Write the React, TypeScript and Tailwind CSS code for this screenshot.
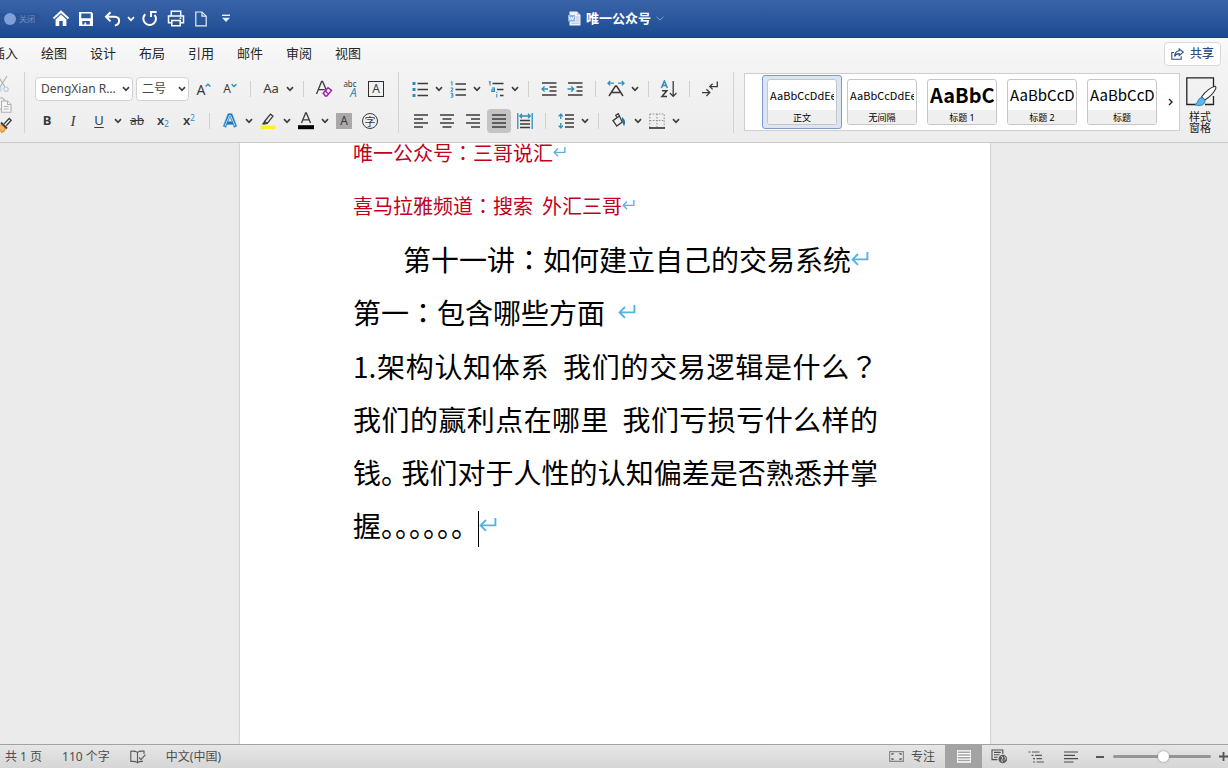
import React from "react";
import type { ReactNode } from "react";

const UI_FONT = "font-['Noto_Sans','Noto_Sans_CJK_SC',sans-serif]";
const INK = "#3b3b3b";
const TEAL = "#2b8fb8";

function Tool({ label, active = false, children }: { label: string; active?: boolean; children: ReactNode }) {
  return (
    <button type="button" aria-label={label} className="flex h-6 w-[26px] shrink-0 items-center justify-center">
      <span className={active ? "flex h-6 w-6 items-center justify-center rounded-sm bg-[#c4c4c4]" : "flex h-6 w-6 items-center justify-center"}>
        {children}
      </span>
    </button>
  );
}

function ChevronGlyph({ color = "#3f3f3f" }: { color?: string }) {
  return (
    <svg width="8" height="6" viewBox="0 0 8 6" fill="none" stroke={color} strokeWidth="1.7">
      <path d="M1 1.2 L4 4.3 L7 1.2" />
    </svg>
  );
}

function More({ label }: { label: string }) {
  return (
    <button type="button" aria-label={label} className="flex h-6 w-3 shrink-0 items-center justify-center">
      <ChevronGlyph />
    </button>
  );
}

function Sep() {
  return (
    <span className="flex h-6 w-[15px] shrink-0 items-center justify-center">
      <span className="h-4 w-px bg-[#d0d0d0]" />
    </span>
  );
}

function GroupSep() {
  return <span className="mt-[3px] h-[61px] w-px shrink-0 bg-[#d3d3d3]" />;
}

function Icon({ children, w = 18, h = 18 }: { children: ReactNode; w?: number; h?: number }) {
  return (
    <svg width={w} height={h} viewBox={`0 0 ${w} ${h}`} fill="none" stroke={INK} strokeWidth="1.3" className="shrink-0">
      {children}
    </svg>
  );
}

function Dropdown({ label, value, className }: { label: string; value: string; className: string }) {
  return (
    <span className={`relative flex shrink-0 ${className}`}>
      <select
        aria-label={label}
        className="h-6 w-full appearance-none rounded-sm border border-[#d2d2d2] bg-white pl-[5px] text-[12px] text-[#444]"
      >
        <option>{value}</option>
      </select>
      <span className="pointer-events-none absolute right-[3px] top-0 flex h-6 items-center">
        <ChevronGlyph />
      </span>
    </span>
  );
}

function TitleBar() {
  return (
    <header className="grid h-[38px] shrink-0 grid-cols-[1fr_auto_1fr] items-center border-b border-[#1f3f7c] bg-linear-to-b from-[#3a64aa] to-[#1b4a90] text-white">
      <div className="flex items-center">
        <label className="flex h-3 w-[41px] items-center gap-[3px] rounded-r-full bg-[#2a5499] pl-1 text-[8px] text-[#6f8fc4]">
          <input type="checkbox" className="h-3 w-3 shrink-0 appearance-none rounded-full bg-[#7f9fd6]" />
          <span>关闭</span>
        </label>
        <div className="ml-2 flex items-center">
          <button type="button" aria-label="主页" className="flex w-6 justify-center">
            <svg width="18" height="17" viewBox="0 0 18 17">
              <path d="M1.5 8.5 L9 1.7 L16.5 8.5" fill="none" stroke="#fff" strokeWidth="2" />
              <path d="M3.6 9.4 L9 4.6 L14.4 9.4 V16 H10.7 V11 H7.3 V16 H3.6 Z" fill="#fff" />
            </svg>
          </button>
          <button type="button" aria-label="保存" className="flex w-[26px] justify-center">
            <svg width="16" height="16" viewBox="0 0 16 16">
              <path fillRule="evenodd" fill="#fff" d="M1 1 H13.5 L15 2.5 V15 H1 Z M3.3 2.6 V7.2 H12.7 V2.6 Z M4.3 10 V13.6 H6.4 V11.6 H8.2 V13.6 H11.8 V10 Z" />
            </svg>
          </button>
          <button type="button" aria-label="撤消" className="flex w-[26px] justify-center">
            <svg width="17" height="16" viewBox="0 0 17 16" fill="none" stroke="#fff" strokeWidth="2">
              <path d="M6.5 1.2 L2 5.8 L6.5 10.4" />
              <path d="M2.4 5.8 H10.6 C16.6 6 16.6 13.2 10.8 14.6" />
            </svg>
          </button>
          <button type="button" aria-label="撤消列表" className="flex w-3 justify-center">
            <ChevronGlyph color="#fff" />
          </button>
          <button type="button" aria-label="恢复" className="flex w-[26px] justify-center">
            <svg width="18" height="17" viewBox="0 0 18 17" fill="none" stroke="#fff" strokeWidth="2">
              <path d="M4.2 4.2 A6.3 6.3 0 1 0 13.6 4.8" />
              <path d="M10 7 V2 H15.6" />
            </svg>
          </button>
          <button type="button" aria-label="打印" className="flex w-[26px] justify-center">
            <svg width="18" height="17" viewBox="0 0 18 17" fill="none" stroke="#fff" strokeWidth="1.5">
              <path d="M4.3 6 V1.2 H13.7 V6" />
              <path d="M4.3 12.8 H1.5 V6 H16.5 V12.8 H13.7" />
              <path d="M4.8 10.4 H13.2 V15.8 H4.8 Z" />
              <path d="M12.6 8.2 H14.4" />
            </svg>
          </button>
          <button type="button" aria-label="新建" className="flex w-6 justify-center">
            <svg width="12" height="16" viewBox="0 0 12 16" fill="none" stroke="#e8eefa" strokeWidth="1.2">
              <path d="M0.8 1 H7 L11.2 5.2 V14.8 H0.8 Z" />
              <path d="M7 1 V5.2 H11.2" />
            </svg>
          </button>
          <button type="button" aria-label="自定义工具栏" className="flex w-[26px] justify-center">
            <svg width="8" height="9" viewBox="0 0 8 9" fill="#e8eefa">
              <rect x="0" y="0.6" width="8" height="1.4" />
              <path d="M0 3.8 H8 L4 8 Z" />
            </svg>
          </button>
        </div>
      </div>
      <h1 className="flex items-center gap-[5px] pl-1 text-[13px] font-bold">
        <svg width="13" height="15" viewBox="0 0 13 15">
          <path d="M1.5 0.5 H9 L12.5 4 V14.5 H1.5 Z" fill="#eef3fb" />
          <path d="M9 0.5 V4 H12.5 Z" fill="#b9cbe8" />
          <path d="M7.5 6 H11.5 M7.5 8 H11.5 M7.5 10 H11.5 M3 12.2 H11.5" stroke="#9db6dc" strokeWidth="0.8" />
          <rect x="0" y="4" width="7" height="6.5" fill="#8fb0e2" />
          <path d="M1.2 5.5 L2.4 9 L3.5 6 L4.6 9 L5.8 5.5" fill="none" stroke="#fff" strokeWidth="0.9" />
        </svg>
        <span>唯一公众号</span>
        <svg width="8" height="5" viewBox="0 0 8 5" fill="none" stroke="#7f9fd6" strokeWidth="1">
          <path d="M0.5 0.8 L4 4 L7.5 0.8" />
        </svg>
      </h1>
      <span />
    </header>
  );
}

const TABS = ["插入", "绘图", "设计", "布局", "引用", "邮件", "审阅", "视图"];

function TabBar() {
  return (
    <div className="flex h-[31px] shrink-0 items-center justify-between bg-linear-to-b from-[#f9f9f9] to-[#f3f3f3] pr-[7px]">
      <nav className="-ml-2 flex gap-[23px] text-[13px] text-[#262626]">
        {TABS.map((tab) => (
          <a key={tab} href="#ribbon" className="shrink-0">
            {tab}
          </a>
        ))}
      </nav>
      <button
        type="button"
        className="flex h-6 items-center gap-1.5 rounded-sm border border-[#d9d9d9] bg-white px-1.5 text-[12px] font-medium text-[#2b4f8c]"
      >
        <svg width="13" height="12" viewBox="0 0 13 12" fill="none" stroke="#2b4f8c" strokeWidth="1.1">
          <path d="M3 4.5 H0.8 V11.2 H10.2 V8.2" />
          <path d="M8.2 0.9 L12.3 4.2 L8.2 7.5 V5.6 C6 5.5 4.6 6.4 3.6 8.4 C3.8 5 5.4 3 8.2 2.8 Z" />
        </svg>
        共享
      </button>
    </div>
  );
}

function ClipboardGroup() {
  return (
    <div className="flex w-6 shrink-0 flex-col overflow-hidden pt-1">
      <button type="button" aria-label="剪切" className="-ml-1 h-[21px] w-5 opacity-60">
        <svg width="14" height="18" viewBox="0 0 14 18" fill="none" strokeWidth="1.2">
          <path d="M2 1 L9 12 M11 1 L4 12" stroke="#8a8a8a" />
          <circle cx="3" cy="14.2" r="2.2" stroke="#8fb8d4" />
          <circle cx="10" cy="14.2" r="2.2" stroke="#8fb8d4" />
        </svg>
      </button>
      <button type="button" aria-label="复制" className="-ml-1 h-[21px] w-5">
        <svg width="17" height="16" viewBox="0 0 17 16" fill="#f6f6f6" stroke="#b0b0b0" strokeWidth="1.1">
          <path d="M0.5 1 H6.5 L9 3.5 V12 H0.5 Z" />
          <path d="M5.5 4 H11.5 L15 7.5 V15.2 H5.5 Z" />
          <path d="M11.5 4 V7.5 H15 M7.8 9.5 H12.6 M7.8 12 H12.6" />
        </svg>
      </button>
      <button type="button" aria-label="格式刷" className="-ml-1 h-5 w-5">
        <svg width="17" height="17" viewBox="0 0 17 17" fill="none" strokeWidth="1.3">
          <path d="M0.5 9.5 L6 15.5 C8.5 14.5 9.2 12.5 9.3 10.5 L6 7.5 C4 8.5 2.4 9.2 0.5 9.5 Z" fill="#f5b469" stroke="#e39a3d" />
          <path d="M5 5.5 L11 11.5" stroke={INK} strokeWidth="1.8" />
          <path d="M8.3 6.8 L13.2 1.4 L15.2 3.2 L10.3 8.8" stroke={INK} />
        </svg>
      </button>
    </div>
  );
}

function FontGroup() {
  return (
    <div className="flex shrink-0 flex-col gap-2 pl-[9px] pr-[9px] pt-2 text-[#3b3b3b]">
      <div className="flex items-center">
        <span className="w-px" />
        <Dropdown label="字体" value="DengXian R..." className="w-[98px]" />
        <Dropdown label="字号" value="二号" className="ml-[3px] mr-0.5 w-[53px]" />
        <Tool label="增大字号">
          <span className="text-[14px]">A</span>
          <svg width="6" height="12" viewBox="0 0 6 12" fill="none" stroke={TEAL} strokeWidth="1.4">
            <path d="M0.6 3.6 L3 1.2 L5.4 3.6" />
          </svg>
        </Tool>
        <Tool label="减小字号">
          <span className="text-[12px]">A</span>
          <svg width="6" height="12" viewBox="0 0 6 12" fill="none" stroke={TEAL} strokeWidth="1.4">
            <path d="M0.6 1.2 L3 3.6 L5.4 1.2" />
          </svg>
        </Tool>
        <Sep />
        <Tool label="更改大小写">
          <span className="text-[13px]">Aa</span>
        </Tool>
        <More label="大小写选项" />
        <Sep />
        <Tool label="清除格式">
          <Icon>
            <path d="M1.5 14 L6.6 1.5 H7.6 L11.5 10.5 M3.4 9.6 H9.8" />
            <path d="M8.2 13.2 L13 7.6 L16.6 10.4 L11.8 16 H10.4 Z M10 11 L13.8 14" stroke="#a21caf" strokeWidth="1.4" />
          </Icon>
        </Tool>
        <Tool label="拼音指南">
          <span className="flex flex-col items-end leading-none">
            <span className="text-[8px] leading-[8px]">abc</span>
            <span className="text-[12px] italic leading-[10px] text-[#2b8fb8]">A</span>
          </span>
        </Tool>
        <Tool label="字符边框">
          <span className="flex h-4 w-4 items-center justify-center border border-[#2d2d2d] text-[12px]">A</span>
        </Tool>
      </div>
      <div className="flex items-center">
        <Tool label="加粗">
          <span className="text-[13px] font-bold">B</span>
        </Tool>
        <Tool label="倾斜">
          <span className="font-['Liberation_Serif',serif] text-[15px] italic">I</span>
        </Tool>
        <Tool label="下划线">
          <span className="text-[13px] underline underline-offset-2">U</span>
        </Tool>
        <More label="下划线选项" />
        <Tool label="删除线">
          <span className="text-[12px] line-through">ab</span>
        </Tool>
        <Tool label="下标">
          <span className="text-[13px] font-semibold">
            x<sub className="text-[8px] font-normal text-[#2b8fb8]">2</sub>
          </span>
        </Tool>
        <Tool label="上标">
          <span className="text-[13px] font-semibold">
            x<sup className="text-[8px] font-normal text-[#2b8fb8]">2</sup>
          </span>
        </Tool>
        <Sep />
        <Tool label="文本效果">
          <svg width="16" height="16" viewBox="0 0 16 16" fill="none" strokeLinejoin="round">
            <path d="M2.5 14 L7 2 H9 L13.5 14 M4.8 10 H11.2" stroke="#7cc0ee" strokeWidth="4" />
            <path d="M2.5 14 L7 2 H9 L13.5 14 M4.8 10 H11.2" stroke="#1f72b8" strokeWidth="2.4" />
            <path d="M2.8 13.4 L7.4 2.4 H8.6 L13.2 13.4" stroke="#f2f8fd" strokeWidth="0.8" />
          </svg>
        </Tool>
        <More label="文本效果选项" />
        <Tool label="突出显示">
          <Icon>
            <path d="M5.5 9.5 L11.5 2.2 L14 4.2 L8.2 11.4 L5 12 Z M5.5 9.5 L8.2 11.4" />
            <path d="M2.5 12.6 L5 9.8 L6.6 11.8 Z" fill={INK} stroke="none" />
            <rect x="1.5" y="13.4" width="15" height="3.8" rx="1" fill="#fbf51f" stroke="none" />
          </Icon>
        </Tool>
        <More label="突出显示选项" />
        <Tool label="字体颜色">
          <Icon>
            <path d="M4.5 11 L8.6 1 H9.4 L13.5 11 M6 7.8 H12" />
            <rect x="1" y="13.2" width="16" height="4" fill="#000" stroke="none" />
          </Icon>
        </Tool>
        <More label="字体颜色选项" />
        <Tool label="字符底纹">
          <span className="flex h-4 w-4 items-center justify-center bg-[#a9a9a9] text-[12px]">A</span>
        </Tool>
        <Tool label="带圈字符">
          <span className="flex h-4 w-4 items-center justify-center rounded-full border border-[#3b3b3b] text-[11px] leading-none">字</span>
        </Tool>
      </div>
    </div>
  );
}

function ParagraphGroup() {
  return (
    <div className="flex shrink-0 flex-col gap-2 pl-2 pr-2.5 pt-2">
      <div className="flex items-center">
        <Tool label="项目符号">
          <Icon w={16} h={16}>
            <path d="M5.5 2.5 H16 M5.5 8.5 H16 M5.5 14.5 H16" />
            <path d="M0.5 1 H3.5 V4 H0.5 Z M0.5 7 H3.5 V10 H0.5 Z M0.5 13 H3.5 V16 H0.5 Z" fill={TEAL} stroke="none" />
          </Icon>
        </Tool>
        <More label="项目符号选项" />
        <Tool label="编号">
          <Icon w={16} h={17}>
            <path d="M5.5 3 H16 M5.5 8.5 H16 M5.5 14 H16" />
            <path d="M0.8 1.2 L2 0.7 V4.6 M0.6 7 H2.8 V8.4 L0.8 10.2 H3 M0.6 12.4 H2.8 V16.2 H0.6 M1.2 14.2 H2.8" stroke={TEAL} strokeWidth="1" />
          </Icon>
        </Tool>
        <More label="编号选项" />
        <Tool label="多级列表">
          <Icon w={16} h={17}>
            <path d="M4.5 2.5 H15.5 M9 8.5 H15.5 M12 14.5 H15.5" />
            <path d="M0.8 1 L2 0.5 V4.4 M3.8 7 H6.4 V10.4 H3.8 V8.7 H6.4 M8.8 13 V16.6 M8.8 11 V12" stroke={TEAL} strokeWidth="1.1" />
          </Icon>
        </Tool>
        <More label="多级列表选项" />
        <Sep />
        <Tool label="减少缩进">
          <Icon w={16} h={16}>
            <path d="M1 2 H15.5 M8.5 6 H15.5 M8.5 10 H15.5 M1 14 H15.5" />
            <path d="M7 8 H1 M3.6 5.4 L1 8 L3.6 10.6" stroke={TEAL} />
          </Icon>
        </Tool>
        <Tool label="增加缩进">
          <Icon w={16} h={16}>
            <path d="M1 2 H15.5 M9.5 6 H15.5 M9.5 10 H15.5 M1 14 H15.5" />
            <path d="M0.5 8 H6.8 M4.2 5.4 L6.8 8 L4.2 10.6" stroke={TEAL} />
          </Icon>
        </Tool>
        <Sep />
        <Tool label="中文版式">
          <Icon>
            <path d="M2 16 L8.4 6 H9.6 L16 16 M4.6 12.6 H13.4" strokeWidth="1.5" />
            <path d="M1 3.2 H7 M3.2 1 L1 3.2 L3.2 5.4 M11 3.2 H17 M14.8 1 L17 3.2 L14.8 5.4" stroke={TEAL} />
          </Icon>
        </Tool>
        <More label="中文版式选项" />
        <Sep />
        <Tool label="排序">
          <Icon>
            <path d="M1.4 8 L4.4 1 L7.4 8 M2.4 5.6 H6.4" stroke={TEAL} strokeWidth="1.5" />
            <path d="M2 10.8 H6.8 L2 16.4 H7" strokeWidth="1.5" />
            <path d="M13.2 1 V16.4 M9.9 13 L13.2 16.4 L16.5 13" />
          </Icon>
        </Tool>
        <Sep />
        <Tool label="显示编辑标记">
          <Icon>
            <path d="M16.3 1.4 V6.6 H9 M11.6 3.8 L8.8 6.6 L11.6 9.4" />
            <path d="M1 12.6 H8.6 M5.4 9.2 L8.8 12.6 L5.4 16" />
          </Icon>
        </Tool>
      </div>
      <div className="flex items-center">
        <span className="w-px" />
        <Tool label="左对齐">
          <Icon w={14} h={14}>
            <path d="M0 1 H14 M0 5 H9 M0 9 H14 M0 13 H9" />
          </Icon>
        </Tool>
        <Tool label="居中">
          <Icon w={14} h={14}>
            <path d="M0 1 H14 M2.5 5 H11.5 M0 9 H14 M2.5 13 H11.5" />
          </Icon>
        </Tool>
        <Tool label="右对齐">
          <Icon w={14} h={14}>
            <path d="M0 1 H14 M5 5 H14 M0 9 H14 M5 13 H14" />
          </Icon>
        </Tool>
        <Tool label="两端对齐" active>
          <Icon w={14} h={14}>
            <path d="M0 1 H14 M0 5 H14 M0 9 H14 M0 13 H14" />
          </Icon>
        </Tool>
        <Tool label="分散对齐">
          <Icon w={16} h={18}>
            <path d="M3 8.5 H13 M3 12 H13 M3 15.5 H13" />
            <path d="M0.8 1 V17 M15.2 1 V17 M3 4 H13 M5 1.8 L2.8 4 L5 6.2 M11 1.8 L13.2 4 L11 6.2" stroke={TEAL} />
          </Icon>
        </Tool>
        <Sep />
        <Tool label="行距">
          <Icon w={16} h={16}>
            <path d="M7 2 H16 M7 6 H16 M7 10 H16 M7 14 H16" />
            <path d="M2.8 1.2 V6 M0.6 3.4 L2.8 1.2 L5 3.4 M2.8 10 V14.8 M0.6 12.6 L2.8 14.8 L5 12.6" stroke={TEAL} />
          </Icon>
        </Tool>
        <More label="行距选项" />
        <Sep />
        <Tool label="底纹">
          <Icon>
            <path d="M3 8.6 L9.4 4 L12.2 10 L6.8 14 Z M9.4 4 L8.2 1.6 L5.8 3.2 L7.2 6" />
            <path d="M12.6 6.4 C14.4 8 15 10 14 12.6 C13 10.6 12.6 9.4 12.6 6.4 Z" fill="#2b6f98" stroke="#2b6f98" />
          </Icon>
        </Tool>
        <More label="底纹选项" />
        <Tool label="边框">
          <Icon w={16} h={16}>
            <path d="M0.8 1 H15.2 V14 M0.8 1 V14 M8 1 V14 M0.8 7.5 H15.2" stroke="#8d8d8d" strokeWidth="1" strokeDasharray="1.5 1.5" />
            <path d="M0 15 H16" stroke="#222" strokeWidth="1.5" />
          </Icon>
        </Tool>
        <More label="边框选项" />
      </div>
    </div>
  );
}

const STYLES = [
  { name: "正文", sample: "AaBbCcDdEe", look: "text-[11px]", selected: true },
  { name: "无间隔", sample: "AaBbCcDdEe", look: "text-[11px]", selected: false },
  { name: "标题 1", sample: "AaBbC", look: "text-[20px] font-bold", selected: false },
  { name: "标题 2", sample: "AaBbCcD", look: "text-[15px]", selected: false },
  { name: "标题", sample: "AaBbCcD", look: "text-[15px]", selected: false },
];

function StyleGallery() {
  return (
    <div className="mt-1 flex h-[58px] min-w-0 flex-1 items-center overflow-hidden border border-[#cfcfcf] bg-white pl-[17px]">
      {STYLES.map((s) => (
        <button
          key={s.name}
          type="button"
          className={
            s.selected
              ? "h-[54px] w-20 shrink-0 rounded-[3px] border border-[#7d9bc9] bg-[#dbe5f3] px-1 py-[3px]"
              : "h-[54px] w-20 shrink-0 rounded-[3px] border border-transparent px-1 py-[3px]"
          }
        >
          <span className="flex h-full flex-col overflow-hidden rounded-[3px] border border-[#c6c6c6] bg-white px-0.5 text-black">
            <span className={`flex h-[30px] items-center overflow-hidden whitespace-nowrap font-['Noto_Sans_CJK_SC',sans-serif] ${s.look}`}>{s.sample}</span>
            <span className="-mx-0.5 flex flex-1 items-center justify-center bg-[#efefef] text-[9px] leading-none">{s.name}</span>
          </span>
        </button>
      ))}
      <button type="button" aria-label="更多样式" className="flex h-full flex-1 items-center justify-center">
        <svg width="5" height="8" viewBox="0 0 5 8" fill="none" stroke="#222" strokeWidth="1.4">
          <path d="M1 1 L4 4 L1 7" />
        </svg>
      </button>
    </div>
  );
}

function StylePaneButton() {
  return (
    <button type="button" className="flex w-12 shrink-0 flex-col items-start gap-[5px] pl-1.5 pt-2 text-[11px] leading-[11px] text-[#222]">
      <svg width="32" height="29" viewBox="0 0 32 29" fill="none">
        <path d="M10.5 27.5 H0.8 V0.8 H27.5 V10 M27.5 19 V27.5 H19" stroke="#222" strokeWidth="1.3" />
        <path d="M15.5 20 C19 15 24 10.5 29.2 9.2 C30.4 10 30 11 29.6 12 C27 17 23 20.5 18.8 23 Z" fill="#fff" stroke="#333" strokeWidth="1.1" />
        <path d="M9 27.6 C11.5 26.5 11.5 24 13 22 C14.5 20 17.5 20.5 18.6 22.6 C19.8 25 18 27.8 14.8 28.4 C12.5 28.7 10.5 28.4 9 27.6 Z" fill="#5ab6ee" stroke="#2d74a8" strokeWidth="0.9" />
      </svg>
      <span className="flex flex-col pl-[3px]">
        <span>样式</span>
        <span>窗格</span>
      </span>
    </button>
  );
}

function ReturnMark({ large = false }: { large?: boolean }) {
  return (
    <svg
      width={large ? 18 : 13}
      height={large ? 20 : 15}
      viewBox="0 0 18 20"
      fill="none"
      stroke="#55b3e4"
      strokeWidth="1.9"
      className="inline-block align-baseline"
    >
      <path d="M16.4 1 V8.4 H1.6 M7 3 L1.6 8.4 L7 13.8" />
    </svg>
  );
}

function Colon() {
  return <span className="font-['Noto_Sans_CJK_TC',sans-serif]">：</span>;
}

function DocumentArea() {
  return (
    <main className="min-h-0 flex-1 overflow-hidden bg-[#ebebeb] pl-0.5">
      <article className="mx-auto flow-root h-full w-full max-w-[750px] bg-white pl-[113px] pr-[112px] font-['Noto_Sans_CJK_SC',sans-serif] leading-[53px] text-black shadow-[0_0_2px_#a8a8a8]">
        <div className="-mt-[17px] flex flex-col gap-px whitespace-pre-wrap text-[28px]">
          <div className="text-[20px] text-[#c0001d]">
            <p>
              唯一公众号
              <Colon />
              三哥说汇
              <ReturnMark />
            </p>
            <p>
              喜马拉雅频道
              <Colon />
              {"搜索  外汇三哥"}
              <ReturnMark />
            </p>
          </div>
          <div>
            <h2 className="pl-[50px]">
              第十一讲
              <Colon />
              如何建立自己的交易系统
              <ReturnMark large />
            </h2>
            <p>
              第一
              <Colon />
              {"包含哪些方面  "}
              <ReturnMark large />
            </p>
          </div>
          <p className="text-justify">
            {"1.架构认知体系  我们的交易逻辑是什么"}
            <span className="font-['Noto_Sans_CJK_TC',sans-serif]">？</span>
            我们的赢利点在哪里{"  "}我们亏损亏什么样的钱<span className="[font-feature-settings:'halt']">。</span>
            {" "}我们对于人性的认知偏差是否熟悉并掌握<span className="[font-feature-settings:'halt']">。。。。。。</span>
            {"  "}
            <span className="inline-block h-9 w-px bg-black align-middle" />
            <ReturnMark large />
          </p>
        </div>
      </article>
    </main>
  );
}

function StatusBar() {
  return (
    <footer className="flex h-6 shrink-0 items-center justify-between overflow-hidden border-t border-[#a3a3a3] bg-linear-to-b from-[#e6e6e6] to-[#d6d6d6] text-[12px] text-[#4d4d4d]">
      <div className="flex items-center gap-5 whitespace-nowrap pl-[5px]">
        <span>共 1 页</span>
        <span>110 个字</span>
        <button type="button" aria-label="拼写检查">
          <svg width="16" height="14" viewBox="0 0 16 14" fill="none" stroke="#5a5a5a" strokeWidth="1.1">
            <path d="M7.5 2.4 C5.6 1 3.2 1 0.8 1.2 V11.4 C3.2 11.2 5.6 11.2 7.5 12.6 V2.4 C9 1.2 10.6 1 12.4 1.1 H14 V4" />
            <path d="M7.5 12.6 C9 11.4 11 11.3 13 11.4 M9 7.4 L11 9.6 L15.4 4.6" />
          </svg>
        </button>
        <span>中文(中国)</span>
      </div>
      <div className="flex h-full items-center">
        <button type="button" className="flex items-center gap-[7px] pr-2.5">
          <svg width="15" height="11" viewBox="0 0 15 11" fill="none" stroke="#4d4d4d" strokeWidth="1.1">
            <path d="M0.6 0.6 H14.4 V10.4 H0.6 Z" strokeOpacity="0.6" />
            <path d="M3 4 V2.8 H4.8 M10.2 2.8 H12 V4 M12 7 V8.2 H10.2 M4.8 8.2 H3 V7" />
          </svg>
          专注
        </button>
        <button type="button" aria-label="页面视图" className="flex h-full w-[37px] items-center justify-center bg-[#a3a3a3]">
          <svg width="14" height="13" viewBox="0 0 14 13" stroke="#fff" strokeWidth="1.3">
            <path d="M0 0.8 H14 M0 3.6 H14 M0 6.4 H14 M0 9.2 H14 M0 12 H14" />
            <path d="M0.6 0.8 V12 M13.4 0.8 V12" strokeWidth="0.8" />
          </svg>
        </button>
        <button type="button" aria-label="Web 版式" className="flex w-[35px] justify-center">
          <svg width="17" height="15" viewBox="0 0 17 15" fill="none" stroke="#4d4d4d" strokeWidth="1.1">
            <path d="M11.8 5 V1 H1 V10.6 H6.4 M3 3.4 H9.8 M3 5.8 H8.6 M3 8.2 H6.6" />
            <circle cx="11.8" cy="10" r="4.3" fill="#5a5a5a" stroke="none" />
            <path d="M10.2 7 L12 9 L10.6 11 L11.6 13.4 M13.4 7.4 L14.8 9.8 L13 11.6" stroke="#ddd" strokeWidth="0.9" />
          </svg>
        </button>
        <button type="button" aria-label="大纲" className="flex w-[38px] justify-center">
          <svg width="16" height="12" viewBox="0 0 16 12" stroke="#5a5a5a" strokeWidth="1.2">
            <path d="M0.5 1 H2.5 M4 1 H11.5 M3.5 4.3 H5.5 M7 4.3 H14 M5 7.6 H7 M8.5 7.6 H14 M5 11 H7 M8.5 11 H16" />
          </svg>
        </button>
        <button type="button" aria-label="草稿" className="flex w-8 justify-center">
          <svg width="14" height="12" viewBox="0 0 14 12" stroke="#4d4d4d" strokeWidth="1.2">
            <path d="M0 1 H14 M0 4.3 H11 M0 7.6 H14 M0 11 H9.5" />
          </svg>
        </button>
        <button type="button" aria-label="缩小" className="flex w-[26px] justify-center">
          <span className="h-0.5 w-2 bg-[#555]" />
        </button>
        <input
          type="range"
          aria-label="缩放"
          min={0}
          max={100}
          defaultValue={52}
          className="h-3 w-[98px] appearance-none bg-transparent [&::-webkit-slider-runnable-track]:h-[3px] [&::-webkit-slider-runnable-track]:rounded-full [&::-webkit-slider-runnable-track]:bg-[#959595] [&::-webkit-slider-thumb]:-mt-1 [&::-webkit-slider-thumb]:h-[11px] [&::-webkit-slider-thumb]:w-[11px] [&::-webkit-slider-thumb]:appearance-none [&::-webkit-slider-thumb]:rounded-full [&::-webkit-slider-thumb]:bg-white [&::-webkit-slider-thumb]:shadow-[0_0_2px_#777]"
        />
        <button type="button" aria-label="放大" className="flex w-[17px] justify-end">
          <svg width="9" height="9" viewBox="0 0 9 9" stroke="#555" strokeWidth="1.8">
            <path d="M0 4.5 H9 M4.5 0 V9" />
          </svg>
        </button>
      </div>
    </footer>
  );
}

export default function App() {
  return (
    <div className={`flex h-screen flex-col overflow-hidden ${UI_FONT}`}>
      <TitleBar />
      <TabBar />
      <div id="ribbon" className="flex h-[74px] shrink-0 items-start overflow-hidden border-b border-[#c9c9c9] bg-linear-to-b from-[#f3f3f3] to-[#ededed]">
        <ClipboardGroup />
        <GroupSep />
        <FontGroup />
        <GroupSep />
        <ParagraphGroup />
        <GroupSep />
        <span className="w-2.5 shrink-0" />
        <StyleGallery />
        <StylePaneButton />
      </div>
      <DocumentArea />
      <StatusBar />
    </div>
  );
}
